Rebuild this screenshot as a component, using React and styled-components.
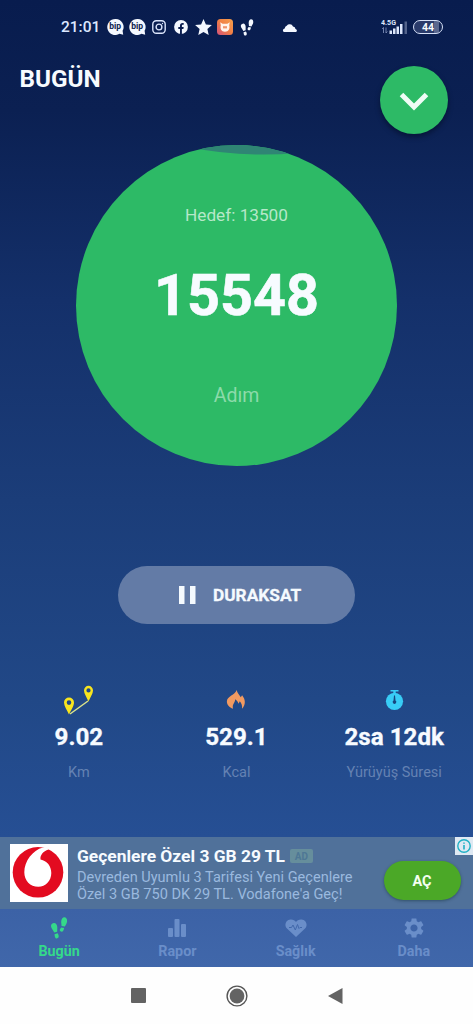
import React from 'react';
import styled, { createGlobalStyle } from 'styled-components';

/* ---------------------------------- Icons --------------------------------- */
const Footprints = ({ width, height }) => (
  <svg width={width} height={height} viewBox="0 0 17 22" fill="currentColor">
    <path d="M3.2 6C5.200 5.700 6.700 7.800 6.800 10.200c.1 1.700-.2 3-.1 4.500l-3 .9C3.200 13.700 1 12.100.6 9.800.2 7.700 1.300 6.300 3.200 6z" />
    <path d="M4 17.300l3.100-1c.8 1.400 1.500 2.800.9 4-.6 1.200-2.200 1.500-3 .6-.9-.9-.7-2.200-1-3.600z" />
    <path d="M13.800.3c1.900 0 2.900 1.700 2.800 3.900-.1 2.400-1.600 3.600-2.300 5.400l-3.300-.7c.2-1.500-.5-2.800-.3-4.500C10.900 2.200 12 .3 13.800.3z" />
    <path d="M10.600 10.400l3.100.7c-.5 1.400-.5 2.800-1.700 3.400-1.100.5-2.500-.1-2.700-1.300-.2-1 .8-1.800 1.300-2.800z" />
  </svg>
);

const Bip = () => (
  <svg width="17" height="16" viewBox="0 0 17 16">
    <path
      d="M8.300 0a8 8 0 1 0 4.200 14.800l3.700.9-.6-3.900A8 8 0 0 0 8.300 0z"
      fill="#f4f8ff"
    />
    <text
      x="8.200"
      y="10.200"
      textAnchor="middle"
      fontFamily="Roboto, sans-serif"
      fontWeight="700"
      fontSize="8.500"
      fill="#0b1c4d"
    >
      bip
    </text>
  </svg>
);

const Instagram = () => (
  <svg width="14" height="14" viewBox="0 0 14 14" fill="none" stroke="#dce5fb">
    <rect x=".8" y=".8" width="12.400" height="12.400" rx="3.500" strokeWidth="1.400" />
    <circle cx="7" cy="7" r="2.900" strokeWidth="1.400" />
    <circle cx="10.500" cy="3.500" r=".7" fill="#dce5fb" stroke="none" />
  </svg>
);

const Facebook = () => (
  <svg width="14" height="14" viewBox="0 0 14 14">
    <circle cx="7" cy="7" r="6.900" fill="#f4f8ff" />
    <path
      d="M6 14V9H4.300V7H6V5.600C6 3.900 7 3 8.500 3c.7 0 1.200.1 1.200.1v1.700h-.8c-.8 0-1 .5-1 1V7h1.800l-.3 2H7.900v5z"
      fill="#0a1c4e"
    />
  </svg>
);

const Star = () => (
  <svg width="17" height="16" viewBox="0 0 17 16" fill="#f4f8ff">
    <path d="M8.500 0l2.400 5.500 6 .6-4.500 4 1.300 5.900-5.200-3.100L3.300 16l1.300-5.900-4.500-4 6-.6z" />
  </svg>
);

const OrangeApp = () => (
  <svg width="16" height="16" viewBox="0 0 16 16">
    <defs>
      <linearGradient id="orangeApp" x1="0" y1="1" x2="1" y2="0">
        <stop offset="0" stopColor="#d4527c" />
        <stop offset=".5" stopColor="#f07f46" />
        <stop offset="1" stopColor="#f7a14c" />
      </linearGradient>
    </defs>
    <rect width="16" height="16" rx="3.500" fill="url(#orangeApp)" />
    <path
      d="M3.200 3.300l2.400 1.400h4.800l2.400-1.400-.6 3c.9 3-.4 6.500-4.200 6.500S2.900 9.300 3.800 6.300z"
      fill="#fff4ed"
    />
    <path d="M6 7.200h4v2.200H6z" fill="#ef946b" />
  </svg>
);

const Cloud = () => (
  <svg width="16" height="9" viewBox="0 0 16 9" fill="#f4f8ff">
    <path d="M2 9A1.900 1.900 0 0 1 2.700 5.400 3.200 3.200 0 0 1 4.700 2.800 3.700 3.700 0 0 1 11 3.400 2.900 2.900 0 0 1 13.500 6 1.600 1.600 0 0 1 14 9z" />
  </svg>
);

const Signal = () => (
  <svg width="27" height="16" viewBox="0 0 27 16" fill="#dce6fb">
    <text
      x="0"
      y="5.500"
      fontFamily="Roboto, sans-serif"
      fontWeight="700"
      fontSize="6.600"
      textLength="15"
      lengthAdjust="spacingAndGlyphs"
    >
      4.5G
    </text>
    <path
      d="M2.500 14V8.500M1.200 10l1.300-1.500M5 8.500V14m1.300-1.500L5 14"
      fill="none"
      stroke="#8b9ac4"
      strokeWidth=".8"
    />
    <path d="M8.500 11.500H11V15H8.500zM12 9.500h2.500V15H12zM15.500 7.500H18V15h-2.500zM19 5h2.500v10H19z" />
    <path d="M23.500 2.500H26V15h-2.500z" opacity=".35" />
  </svg>
);

const ChevronDown = () => (
  <svg width="30" height="20" viewBox="0 0 30 20" fill="none">
    <path d="M2.500 2.500L15 15 27.500 2.500" stroke="#effcf5" strokeWidth="5" />
  </svg>
);

const PauseIcon = () => (
  <svg width="17" height="18" viewBox="0 0 17 18" fill="#f5fafe">
    <path d="M0 0h5.500v18H0zM11 0h5.500v18H11z" />
  </svg>
);

const RouteIcon = () => (
  <svg width="31" height="31" viewBox="0 0 31 31">
    <path d="M7 29l18-13" stroke="#dce48a" strokeWidth="1.500" fill="none" />
    <path
      fill="#f8e51e"
      fillRule="evenodd"
      d="M6 12.500a5 5 0 0 0-5 5c0 3.500 3 7.500 5 12 2-4.500 5-8.500 5-12a5 5 0 0 0-5-5zm0 2.800a2.300 2.300 0 1 1 0 4.600 2.300 2.300 0 0 1 0-4.600z"
    />
    <path
      fill="#f8e51e"
      fillRule="evenodd"
      d="M25.500.8A4.600 4.600 0 0 0 21 5.400c0 3.200 2.700 6.600 4.500 11 1.800-4.400 4.500-7.800 4.500-11A4.600 4.600 0 0 0 25.500.8zm0 2.500a2.100 2.100 0 1 1 0 4.200 2.100 2.100 0 0 1 0-4.200z"
    />
  </svg>
);

const FlameIcon = () => (
  <svg width="20" height="20" viewBox="0 0 20 20" fill="#f29a61">
    <path d="M10.700 0c.4 3.200 2.600 4.600 4.100 7.300l1.300-2c3.500 4.300 3.900 9.300-.1 13.500.5-3.500-.6-5.500-2.200-7.500l-1.200 2.500c-.7-2-1.500-3.200-3.500-4.600.3 3.500-3.200 4.300-2.100 9.600C3.500 17.500.5 14.700.9 11 1.400 6.200 8.900 5 10.700 0z" />
  </svg>
);

const StopwatchIcon = () => (
  <svg width="19" height="20" viewBox="0 0 19 20">
    <path d="M5.500 0h8v1.600h-2.800V4H8.300V1.600H5.500z" fill="#38cdf6" />
    <circle cx="9.500" cy="11.300" r="8.600" fill="#38cdf6" />
    <path d="M9 5.500h1l.5 5a1.800 1.800 0 1 1-2 0z" fill="#17477f" />
  </svg>
);

const SwooshLogo = () => (
  <svg width="58" height="58" viewBox="0 0 58 58">
    <circle cx="28" cy="28.300" r="25.300" fill="#e30b20" />
    <path
      d="M38.500 5.500C33 7.500 30 11 30.500 15.500c6.500 1.200 10.800 6.600 10.800 13.600 0 7.700-5.600 13.700-13 13.700-8.100 0-14-6.100-14-14.500C14.300 17.600 22.500 6.200 33 3.600c2-.5 6 .5 5.500 1.900z"
      fill="#fff"
    />
  </svg>
);

const InfoIcon = () => (
  <svg width="14" height="14" viewBox="0 0 14 14" fill="none" stroke="#20b1c5">
    <circle cx="7" cy="7" r="6.200" strokeWidth="1.400" />
    <path d="M7 6v4.500M7 3.400v1.400" strokeWidth="1.600" />
  </svg>
);

const ReportIcon = () => (
  <svg width="18" height="18" viewBox="0 0 18 18" fill="currentColor">
    <rect y="9" width="5" height="9" rx="1" />
    <rect x="6.500" width="5" height="18" rx="1" />
    <rect x="13" y="5" width="5" height="13" rx="1" />
  </svg>
);

const HealthIcon = () => (
  <svg width="22" height="18" viewBox="0 0 22 18">
    <path
      d="M11 18L2 9.500C-1 6.500.3 1 5.500.5 8 .3 10 1.500 11 3c1-1.500 3-2.700 5.500-2.500C21.700 1 23 6.500 20 9.500z"
      fill="currentColor"
    />
    <path
      d="M4 8.500h2.500l1.500-2.500 2.300 5 2.200-5.500 1.500 4 1-1H17"
      fill="none"
      stroke="#4168ab"
      strokeWidth="1"
    />
  </svg>
);

const GearIcon = () => (
  <svg width="20" height="20" viewBox="2 2 20 20" fill="currentColor">
    <path d="M19.140 12.940c.04-.3.06-.61.06-.94 0-.32-.02-.64-.07-.94l2.030-1.580c.18-.14.23-.41.12-.61l-1.920-3.320c-.12-.22-.37-.29-.59-.22l-2.390.96c-.5-.38-1.030-.7-1.620-.94l-.36-2.540c-.04-.24-.24-.41-.48-.41h-3.840c-.24 0-.43.17-.47.41l-.36 2.540c-.59.24-1.130.57-1.620.94l-2.390-.96c-.22-.08-.47 0-.59.22L2.740 8.870c-.12.21-.08.47.12.61l2.030 1.580c-.05.3-.09.63-.09.94s.02.64.07.94l-2.030 1.580c-.18.14-.23.41-.12.61l1.920 3.320c.12.22.37.29.59.22l2.390-.96c.5.38 1.030.7 1.620.94l.36 2.540c.05.24.24.41.48.41h3.840c.24 0 .44-.17.47-.41l.36-2.540c.59-.24 1.130-.56 1.620-.94l2.390.96c.22.08.47 0 .59-.22l1.920-3.320c.12-.22.07-.47-.12-.61l-2.010-1.580zM12 15.600c-1.980 0-3.600-1.620-3.600-3.600s1.620-3.600 3.600-3.600 3.600 1.620 3.600 3.600-1.620 3.600-3.600 3.600z" />
  </svg>
);

/* ---------------------------------- Data ---------------------------------- */
const metrics = [
  { icon: <RouteIcon />, value: '9.02', label: 'Km' },
  { icon: <FlameIcon />, value: '529.1', label: 'Kcal' },
  { icon: <StopwatchIcon />, value: '2sa 12dk', label: 'Yürüyüş Süresi' },
];

const tabs = [
  { icon: <Footprints width={18} height={22} />, label: 'Bugün', active: true },
  { icon: <ReportIcon />, label: 'Rapor' },
  { icon: <HealthIcon />, label: 'Sağlık' },
  { icon: <GearIcon />, label: 'Daha' },
];

const App = () => {
  return (
    <Screen>
      <GlobalStyle />
      <StatusBar>
        <Clock>21:01</Clock>
        <Notifications>
          <Bip />
          <Bip />
          <Instagram />
          <Facebook />
          <Star />
          <OrangeApp />
          <Footprints width={14} height={17} />
        </Notifications>
        <Cloud />
        <StatusRight>
          <Signal />
          <Battery>44</Battery>
        </StatusRight>
      </StatusBar>

      <Header>
        <Title>BUGÜN</Title>
        <RoundButton aria-label="Aç">
          <ChevronDown />
        </RoundButton>
      </Header>

      <Goal>
        <Wave viewBox="0 0 321 321">
          <path d="M112 0h110v8Q165 13 112 2z" fill="#2f8574" />
        </Wave>
        <GoalTarget>Hedef: 13500</GoalTarget>
        <GoalSteps>15548</GoalSteps>
        <GoalUnit>Adım</GoalUnit>
      </Goal>

      <PauseButton>
        <PauseIcon />
        DURAKSAT
      </PauseButton>

      <Metrics>
        {metrics.map((m) => (
          <Metric key={m.label}>
            <MetricIcon>{m.icon}</MetricIcon>
            <MetricValue>{m.value}</MetricValue>
            <MetricLabel>{m.label}</MetricLabel>
          </Metric>
        ))}
      </Metrics>

      <Ad>
        <AdLogo>
          <SwooshLogo />
        </AdLogo>
        <AdBody>
          <AdTitle>
            Geçenlere Özel 3 GB 29 TL <AdTag>AD</AdTag>
          </AdTitle>
          <AdText>
            Devreden Uyumlu 3 Tarifesi Yeni Geçenlere
            <br />
            Özel 3 GB 750 DK 29 TL. Vodafone'a Geç!
          </AdText>
        </AdBody>
        <AdButton>AÇ</AdButton>
        <AdInfo>
          <InfoIcon />
        </AdInfo>
      </Ad>

      <TabBar>
        {tabs.map((t) => (
          <Tab key={t.label} $active={t.active}>
            <TabIcon>{t.icon}</TabIcon>
            {t.label}
          </Tab>
        ))}
      </TabBar>

      <SystemNav>
        <svg width="15" height="15" viewBox="0 0 15 15">
          <rect width="15" height="15" rx="1" fill="#636363" />
        </svg>
        <svg width="22" height="22" viewBox="0 0 22 22">
          <circle cx="11" cy="11" r="9.900" fill="none" stroke="#555" strokeWidth="1.400" />
          <circle cx="11" cy="11" r="7.400" fill="#636363" />
        </svg>
        <svg width="15" height="16" viewBox="0 0 15 16">
          <path d="M0 8L14.500 0v16z" fill="#636363" />
        </svg>
      </SystemNav>
    </Screen>
  );
};

/* --------------------------------- Styles --------------------------------- */
const GlobalStyle = createGlobalStyle`
  * {
    box-sizing: border-box;
  }
  body {
    margin: 0;
    font-family: Roboto, 'Liberation Sans', sans-serif;
  }
  svg {
    display: block;
    flex: none;
  }
  button {
    border: 0;
    padding: 0;
    font-family: inherit;
  }
  h1, p {
    margin: 0;
  }
`;

const Screen = styled.div`
  display: flex;
  flex-direction: column;
  width: 473px;
  height: 1024px;
  overflow: hidden;
  color: #f7fbff;
  background: linear-gradient(
    #081c4e 0,
    #0b2052 110px,
    #14306a 300px,
    #1b3d79 500px,
    #214887 700px,
    #264f94 837px
  );
`;

const StatusBar = styled.div`
  display: flex;
  align-items: center;
  height: 54px;
  padding: 0 30px 0 61px;
`;

const Clock = styled.span`
  width: 43px;
  font-size: 15.500px;
  font-weight: 500;
  color: #dce8ff;
`;

const Notifications = styled.div`
  display: grid;
  grid-template-columns: repeat(7, 22px);
  align-items: center;
  justify-items: center;
  width: 178px;
  color: #f4f8ff;
`;

const StatusRight = styled.div`
  display: flex;
  align-items: center;
  gap: 5px;
  margin-left: auto;
`;

const Battery = styled.div`
  display: flex;
  align-items: center;
  justify-content: center;
  width: 30px;
  height: 14px;
  border: 1.500px solid #d6e0f6;
  border-radius: 7px;
  background: linear-gradient(90deg, #2a3b6b 0 70%, #59678e 70% 90%, #132655 90%);
  font-size: 10.500px;
  font-weight: 700;
`;

const Header = styled.header`
  display: flex;
  justify-content: space-between;
  height: 91px;
  padding: 12px 25.500px 0 19.500px;
`;

const Title = styled.h1`
  font-size: 24.300px;
  line-height: 25px;
  font-weight: 700;
`;

const RoundButton = styled.button`
  display: flex;
  align-items: center;
  justify-content: center;
  width: 68px;
  height: 68px;
  padding-top: 4px;
  border-radius: 50%;
  background: #2dba66;
  box-shadow: 0 3px 5px rgba(0, 10, 30, 0.5);
`;

const Goal = styled.section`
  position: relative;
  display: flex;
  flex-direction: column;
  align-items: center;
  align-self: center;
  width: 321px;
  height: 321px;
  padding-top: 60px;
  border-radius: 50%;
  overflow: hidden;
  background: #2dba66;
`;

const Wave = styled.svg`
  position: absolute;
  top: 0;
  left: 0;
  width: 321px;
  height: 321px;
`;

const GoalTarget = styled.p`
  position: relative;
  font-size: 17.200px;
  line-height: 20px;
  color: #b6e8c9;
`;

const GoalSteps = styled.p`
  position: relative;
  margin-top: 37px;
  font-size: 57.500px;
  line-height: 68px;
  font-weight: 700;
  -webkit-text-stroke: 0.6px #f7fbff;
`;

const GoalUnit = styled.p`
  position: relative;
  margin-top: 54px;
  font-size: 19.500px;
  line-height: 24px;
  color: #8cdaaa;
`;

const PauseButton = styled.button`
  display: flex;
  align-items: center;
  align-self: center;
  gap: 17px;
  width: 237px;
  height: 58px;
  margin-top: 100px;
  padding-left: 61px;
  border-radius: 29px;
  background: #637ba6;
  color: #f5fafe;
  font-size: 17.300px;
  font-weight: 700;
  -webkit-text-stroke: 0.3px #f5fafe;
`;

const Metrics = styled.section`
  display: grid;
  grid-template-columns: repeat(3, 1fr);
  height: 213px;
  padding-top: 60px;
`;

const Metric = styled.div`
  display: flex;
  flex-direction: column;
  align-items: center;
`;

const MetricIcon = styled.div`
  display: flex;
  align-items: center;
  height: 32px;
`;

const MetricValue = styled.p`
  margin-top: 7px;
  font-size: 24.200px;
  line-height: 28px;
  font-weight: 700;
  -webkit-text-stroke: 0.3px #f7fbff;
`;

const MetricLabel = styled.p`
  margin-top: 13px;
  font-size: 14.500px;
  line-height: 18px;
  color: #6482b3;
`;

const Ad = styled.section`
  position: relative;
  display: flex;
  height: 72px;
  padding: 7px 12.500px 0 9.500px;
  background: #50719a;
`;

const AdLogo = styled.div`
  width: 58px;
  height: 58px;
  background: #fff;
`;

const AdBody = styled.div`
  flex: 1;
  padding: 2px 0 0 9.500px;
  white-space: nowrap;
`;

const AdTitle = styled.div`
  display: flex;
  align-items: center;
  gap: 5px;
  font-size: 17.400px;
  line-height: 20px;
  font-weight: 700;
`;

const AdTag = styled.span`
  width: 23px;
  height: 14px;
  border-radius: 2px;
  background: #668e9c;
  color: #4e7795;
  font-size: 10px;
  line-height: 15px;
  text-align: center;
`;

const AdText = styled.p`
  margin-top: 3px;
  font-size: 14.550px;
  line-height: 17px;
  color: #9ab9df;
`;

const AdButton = styled.button`
  width: 77px;
  height: 39px;
  margin-top: 17px;
  padding-top: 2px;
  border-radius: 20px;
  background: #4ba827;
  box-shadow: 0 1px 3px rgba(20, 50, 60, 0.5);
  color: #f4fff0;
  font-size: 14.500px;
  font-weight: 700;
`;

const AdInfo = styled.div`
  position: absolute;
  top: 0;
  right: 0;
  display: flex;
  align-items: center;
  justify-content: center;
  width: 18px;
  height: 18px;
  background: #dfe9f3;
`;

const TabBar = styled.nav`
  display: grid;
  grid-template-columns: repeat(4, 1fr);
  height: 58px;
  background: linear-gradient(#3c62a6, #4067aa);
`;

const Tab = styled.div`
  display: flex;
  flex-direction: column;
  align-items: center;
  padding-top: 6px;
  font-size: 14.300px;
  line-height: 18px;
  font-weight: 700;
  color: ${(props) => (props.$active ? '#35d98a' : '#6a8ec9')};
`;

const TabIcon = styled.div`
  display: flex;
  align-items: center;
  height: 26px;
  margin-bottom: 1px;
`;

const SystemNav = styled.div`
  display: flex;
  align-items: center;
  justify-content: center;
  gap: 80px;
  height: 57px;
  background: #fefefe;
`;

export default App;
